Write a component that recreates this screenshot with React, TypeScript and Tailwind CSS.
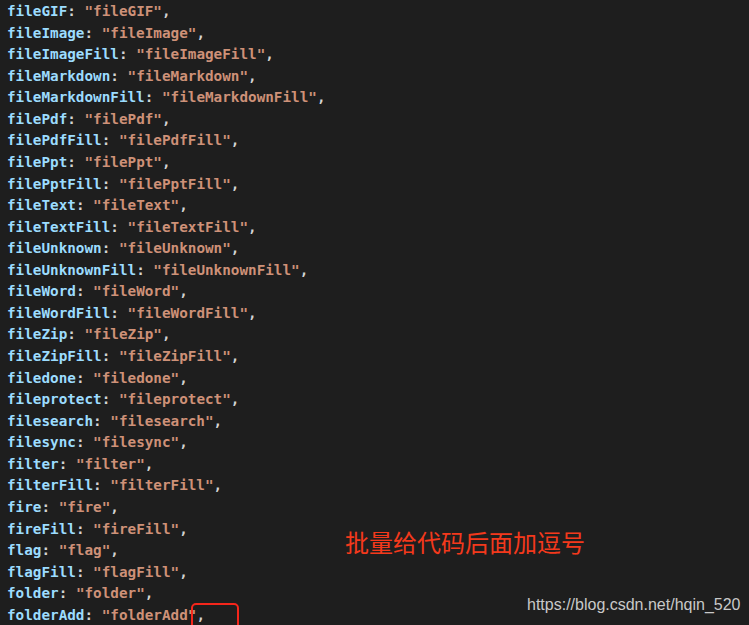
const entries: [string, string][] = [
  ["fileGIF", "fileGIF"],
  ["fileImage", "fileImage"],
  ["fileImageFill", "fileImageFill"],
  ["fileMarkdown", "fileMarkdown"],
  ["fileMarkdownFill", "fileMarkdownFill"],
  ["filePdf", "filePdf"],
  ["filePdfFill", "filePdfFill"],
  ["filePpt", "filePpt"],
  ["filePptFill", "filePptFill"],
  ["fileText", "fileText"],
  ["fileTextFill", "fileTextFill"],
  ["fileUnknown", "fileUnknown"],
  ["fileUnknownFill", "fileUnknownFill"],
  ["fileWord", "fileWord"],
  ["fileWordFill", "fileWordFill"],
  ["fileZip", "fileZip"],
  ["fileZipFill", "fileZipFill"],
  ["filedone", "filedone"],
  ["fileprotect", "fileprotect"],
  ["filesearch", "filesearch"],
  ["filesync", "filesync"],
  ["filter", "filter"],
  ["filterFill", "filterFill"],
  ["fire", "fire"],
  ["fireFill", "fireFill"],
  ["flag", "flag"],
  ["flagFill", "flagFill"],
  ["folder", "folder"],
  ["folderAdd", "folderAdd"],
];

function CodeLine({ k, v, last }: { k: string; v: string; last: boolean }) {
  return (
    <div className="h-[21.57px] leading-[21.57px] whitespace-pre">
      <span className="text-[#9cdcfe]">{k}</span>
      <span className="text-[#d4d4d4]">: </span>
      <span className="text-[#ce9178]">"{v}"</span>
      {last ? (
        // highlighted comma with the red annotation box
        <span className="relative text-[#d4d4d4]">
          ,
          <span className="absolute left-[-5px] top-[-4px] h-[31px] w-[48px] rounded-[5px] border-2 border-[#f5261b]" />
        </span>
      ) : (
        <span className="text-[#d4d4d4]">,</span>
      )}
    </div>
  );
}

export default function App() {
  return (
    <div className="relative h-[625px] w-[749px] overflow-hidden bg-[#1e1e1e]">
      <div className="mt-[1px] pl-[7px] font-['DejaVu_Sans_Mono',monospace] text-[14.3px] font-semibold">
        {entries.map(([k, v], i) => (
          <CodeLine key={k} k={k} v={v} last={i === entries.length - 1} />
        ))}
      </div>
      <div className="absolute left-[345px] top-[527px] font-['Noto_Sans_CJK_SC',sans-serif] text-[24px] leading-[30px] text-[#f4391c]">
        批量给代码后面加逗号
      </div>
      <div className="absolute left-[527px] top-[595px] font-['Liberation_Sans',sans-serif] text-[16px] leading-[20px] text-[#c9c9c9]">
        https://blog.csdn.net/hqin_520
      </div>
    </div>
  );
}
